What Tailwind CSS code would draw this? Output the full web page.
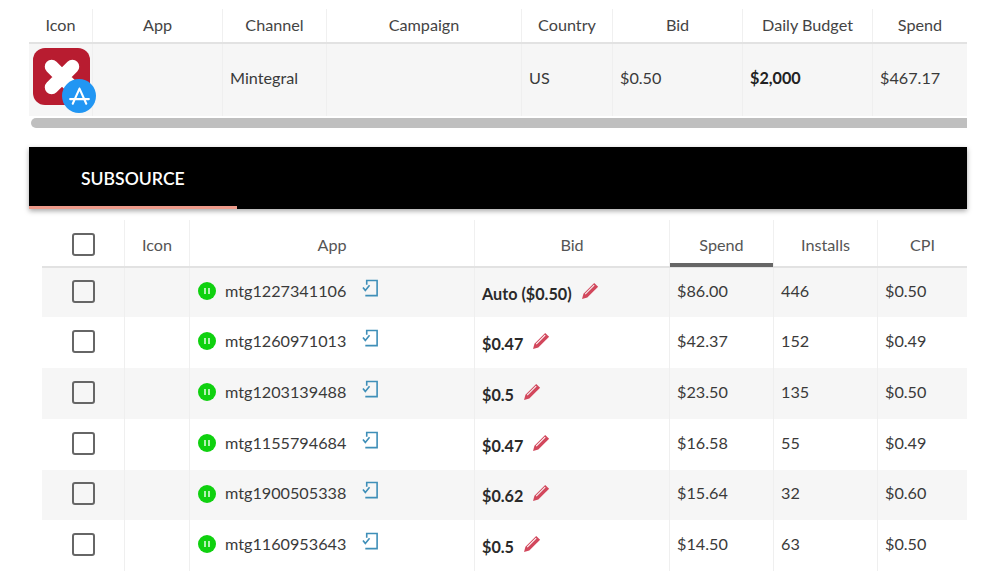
<!DOCTYPE html>
<html lang="en">
<head>
<meta charset="UTF-8">
<title>Subsource</title>
<script src="https://cdn.jsdelivr.net/npm/@tailwindcss/browser@4"></script>
</head>
<body class="bg-white font-['Lato','Open_Sans',sans-serif] text-[16.2px] text-[#3a3a3a] overflow-hidden">
<div class="w-[1000px] h-[576px] overflow-hidden pl-[29px] pt-[9px]">

  <!-- campaign table -->
  <div class="w-[938px]">
    <div class="grid grid-cols-[64px_130px_104px_195px_91px_130px_130px_94px] h-[35px] border-b-2 border-[#e2e2e2] text-center text-[#444] divide-x divide-[#f0f0f0]">
      <div class="pt-[4px]">Icon</div>
      <div class="pt-[4px]">App</div>
      <div class="pt-[4px]">Channel</div>
      <div class="pt-[4px]">Campaign</div>
      <div class="pt-[4px]">Country</div>
      <div class="pt-[4px]">Bid</div>
      <div class="pt-[4px]">Daily Budget</div>
      <div class="pt-[4px]">Spend</div>
    </div>
    <div class="grid grid-cols-[64px_130px_104px_195px_91px_130px_130px_94px] h-[72px] bg-[#f6f6f6] items-center divide-x divide-[#efefef] [&>div]:h-full [&>div]:flex [&>div]:items-center [&>div]:px-[7px] [&>div]:pb-[4px]">
      <div class="relative">
        <div class="absolute left-[4px] top-[4px] w-[57px] h-[57px] rounded-[12px] bg-[#b81c30] flex items-center justify-center">
          <svg viewBox="0 0 40 40" class="w-[46px] h-[46px]"><path d="M11 11 L29 29 M29 11 L11 29" stroke="#fff" stroke-width="12" stroke-linecap="round"/></svg>
        </div>
        <div class="absolute left-[33px] top-[35px] w-[34px] h-[34px] rounded-full bg-[#2196f3] flex items-center justify-center">
          <svg viewBox="0 0 24 24" class="w-[25px] h-[25px]" fill="none" stroke="#fff" stroke-width="2" stroke-linecap="round"><path d="M12 4.500 L5.500 19 M12 4.500 L18.500 19 M3 14.500 H21"/></svg>
        </div>
      </div>
      <div></div>
      <div>Mintegral</div>
      <div></div>
      <div>US</div>
      <div>$0.50</div>
      <div class="font-bold text-[#222]">$2,000</div>
      <div>$467.17</div>
    </div>
    <div class="h-[10px] mt-[2px] ml-[2px] bg-[#bfbfbf] rounded-l-full"></div>
  </div>

  <!-- subsource tab bar -->
  <div class="w-[938px] h-[62px] mt-[19px] bg-black shadow-[0_2px_5px_rgba(0,0,0,0.35)]">
    <div class="w-[208px] h-full border-b-[3px] border-[#ee9a8a] pl-[52px] pt-[19px] text-white text-[17.6px] font-semibold">SUBSOURCE</div>
  </div>

  <!-- subsource table -->
  <div class="w-[925px] ml-[13px] mt-[11px]">
    <div class="grid grid-cols-[83px_65px_285px_195px_104px_104px_89px] h-[48px] border-b-2 border-[#e2e2e2] text-center text-[#555] divide-x divide-[#f0f0f0] [&>div]:pt-[13px]">
      <div class="flex justify-center"><span class="w-[23px] h-[23px] border-2 border-[#666] rounded-[3px]"></span></div>
      <div>Icon</div>
      <div>App</div>
      <div>Bid</div>
      <div class="relative">Spend<span class="absolute left-0 right-0 bottom-[-1px] h-[4px] bg-[#666]"></span></div>
      <div>Installs</div>
      <div>CPI</div>
    </div>

    <div class="grid grid-cols-[83px_65px_285px_195px_104px_104px_89px] h-[49px] bg-[#f6f6f6] divide-x divide-[#efefef] [&>div]:flex [&>div]:items-center [&>div]:px-[7px] [&>div]:pb-[3px]">
      <div class="justify-center !px-0"><span class="w-[23px] h-[23px] border-2 border-[#666] rounded-[3px]"></span></div>
      <div></div>
      <div class="!pl-[8px] gap-[9px]">
        <svg viewBox="0 0 18 18" class="w-[18px] h-[18px] shrink-0"><circle cx="9" cy="9" r="9" fill="#0fd10f"/><path d="M7 6v6M11 6v6" stroke="#c4f5c4" stroke-width="1.8"/></svg>
        <span class="w-[122px]">mtg1227341106</span>
        <svg viewBox="0 0 18 20" class="w-[17px] h-[19px] ml-[6px] -mt-[6px]" fill="none" stroke="#3f8fb8" stroke-width="1.7"><path d="M5 6V1.500h11v16H3.500"/><path d="M1 9l2.500 3L8 6.500"/></svg>
      </div>
      <div class="font-bold text-[#2a2a2a] text-[16.2px] gap-[9px]"><span class="mt-[6px]">Auto ($0.50)</span>
        <svg viewBox="0 0 18 18" class="w-[19px] h-[19px] -mt-[2px]" fill="#d2475c"><path d="M1 17l1.300-5L12.500 1.800l3.700 3.700L6 15.700z"/><path d="M4 12.500L12.500 4" stroke="#f6f6f6" stroke-width="1"/></svg>
      </div>
      <div>$86.00</div>
      <div>446</div>
      <div>$0.50</div>
    </div>

    <div class="grid grid-cols-[83px_65px_285px_195px_104px_104px_89px] h-[51px] divide-x divide-[#efefef] [&>div]:flex [&>div]:items-center [&>div]:px-[7px] [&>div]:pb-[3px]">
      <div class="justify-center !px-0"><span class="w-[23px] h-[23px] border-2 border-[#666] rounded-[3px]"></span></div>
      <div></div>
      <div class="!pl-[8px] gap-[9px]">
        <svg viewBox="0 0 18 18" class="w-[18px] h-[18px] shrink-0"><circle cx="9" cy="9" r="9" fill="#0fd10f"/><path d="M7 6v6M11 6v6" stroke="#c4f5c4" stroke-width="1.8"/></svg>
        <span class="w-[122px]">mtg1260971013</span>
        <svg viewBox="0 0 18 20" class="w-[17px] h-[19px] ml-[6px] -mt-[6px]" fill="none" stroke="#3f8fb8" stroke-width="1.7"><path d="M5 6V1.500h11v16H3.500"/><path d="M1 9l2.500 3L8 6.500"/></svg>
      </div>
      <div class="font-bold text-[#2a2a2a] text-[16.2px] gap-[9px]"><span class="mt-[6px]">$0.47</span>
        <svg viewBox="0 0 18 18" class="w-[19px] h-[19px] -mt-[2px]" fill="#d2475c"><path d="M1 17l1.300-5L12.500 1.800l3.700 3.700L6 15.700z"/><path d="M4 12.500L12.500 4" stroke="#fff" stroke-width="1"/></svg>
      </div>
      <div>$42.37</div>
      <div>152</div>
      <div>$0.49</div>
    </div>

    <div class="grid grid-cols-[83px_65px_285px_195px_104px_104px_89px] h-[51px] bg-[#f6f6f6] divide-x divide-[#efefef] [&>div]:flex [&>div]:items-center [&>div]:px-[7px] [&>div]:pb-[3px]">
      <div class="justify-center !px-0"><span class="w-[23px] h-[23px] border-2 border-[#666] rounded-[3px]"></span></div>
      <div></div>
      <div class="!pl-[8px] gap-[9px]">
        <svg viewBox="0 0 18 18" class="w-[18px] h-[18px] shrink-0"><circle cx="9" cy="9" r="9" fill="#0fd10f"/><path d="M7 6v6M11 6v6" stroke="#c4f5c4" stroke-width="1.8"/></svg>
        <span class="w-[122px]">mtg1203139488</span>
        <svg viewBox="0 0 18 20" class="w-[17px] h-[19px] ml-[6px] -mt-[6px]" fill="none" stroke="#3f8fb8" stroke-width="1.7"><path d="M5 6V1.500h11v16H3.500"/><path d="M1 9l2.500 3L8 6.500"/></svg>
      </div>
      <div class="font-bold text-[#2a2a2a] text-[16.2px] gap-[9px]"><span class="mt-[6px]">$0.5</span>
        <svg viewBox="0 0 18 18" class="w-[19px] h-[19px] -mt-[2px]" fill="#d2475c"><path d="M1 17l1.300-5L12.500 1.800l3.700 3.700L6 15.700z"/><path d="M4 12.500L12.500 4" stroke="#f6f6f6" stroke-width="1"/></svg>
      </div>
      <div>$23.50</div>
      <div>135</div>
      <div>$0.50</div>
    </div>

    <div class="grid grid-cols-[83px_65px_285px_195px_104px_104px_89px] h-[51px] divide-x divide-[#efefef] [&>div]:flex [&>div]:items-center [&>div]:px-[7px] [&>div]:pb-[3px]">
      <div class="justify-center !px-0"><span class="w-[23px] h-[23px] border-2 border-[#666] rounded-[3px]"></span></div>
      <div></div>
      <div class="!pl-[8px] gap-[9px]">
        <svg viewBox="0 0 18 18" class="w-[18px] h-[18px] shrink-0"><circle cx="9" cy="9" r="9" fill="#0fd10f"/><path d="M7 6v6M11 6v6" stroke="#c4f5c4" stroke-width="1.8"/></svg>
        <span class="w-[122px]">mtg1155794684</span>
        <svg viewBox="0 0 18 20" class="w-[17px] h-[19px] ml-[6px] -mt-[6px]" fill="none" stroke="#3f8fb8" stroke-width="1.7"><path d="M5 6V1.500h11v16H3.500"/><path d="M1 9l2.500 3L8 6.500"/></svg>
      </div>
      <div class="font-bold text-[#2a2a2a] text-[16.2px] gap-[9px]"><span class="mt-[6px]">$0.47</span>
        <svg viewBox="0 0 18 18" class="w-[19px] h-[19px] -mt-[2px]" fill="#d2475c"><path d="M1 17l1.300-5L12.500 1.800l3.700 3.700L6 15.700z"/><path d="M4 12.500L12.500 4" stroke="#fff" stroke-width="1"/></svg>
      </div>
      <div>$16.58</div>
      <div>55</div>
      <div>$0.49</div>
    </div>

    <div class="grid grid-cols-[83px_65px_285px_195px_104px_104px_89px] h-[50px] bg-[#f6f6f6] divide-x divide-[#efefef] [&>div]:flex [&>div]:items-center [&>div]:px-[7px] [&>div]:pb-[3px]">
      <div class="justify-center !px-0"><span class="w-[23px] h-[23px] border-2 border-[#666] rounded-[3px]"></span></div>
      <div></div>
      <div class="!pl-[8px] gap-[9px]">
        <svg viewBox="0 0 18 18" class="w-[18px] h-[18px] shrink-0"><circle cx="9" cy="9" r="9" fill="#0fd10f"/><path d="M7 6v6M11 6v6" stroke="#c4f5c4" stroke-width="1.8"/></svg>
        <span class="w-[122px]">mtg1900505338</span>
        <svg viewBox="0 0 18 20" class="w-[17px] h-[19px] ml-[6px] -mt-[6px]" fill="none" stroke="#3f8fb8" stroke-width="1.7"><path d="M5 6V1.500h11v16H3.500"/><path d="M1 9l2.500 3L8 6.500"/></svg>
      </div>
      <div class="font-bold text-[#2a2a2a] text-[16.2px] gap-[9px]"><span class="mt-[6px]">$0.62</span>
        <svg viewBox="0 0 18 18" class="w-[19px] h-[19px] -mt-[2px]" fill="#d2475c"><path d="M1 17l1.300-5L12.500 1.800l3.700 3.700L6 15.700z"/><path d="M4 12.500L12.500 4" stroke="#f6f6f6" stroke-width="1"/></svg>
      </div>
      <div>$15.64</div>
      <div>32</div>
      <div>$0.60</div>
    </div>

    <div class="grid grid-cols-[83px_65px_285px_195px_104px_104px_89px] h-[51px] divide-x divide-[#efefef] [&>div]:flex [&>div]:items-center [&>div]:px-[7px] [&>div]:pb-[3px]">
      <div class="justify-center !px-0"><span class="w-[23px] h-[23px] border-2 border-[#666] rounded-[3px]"></span></div>
      <div></div>
      <div class="!pl-[8px] gap-[9px]">
        <svg viewBox="0 0 18 18" class="w-[18px] h-[18px] shrink-0"><circle cx="9" cy="9" r="9" fill="#0fd10f"/><path d="M7 6v6M11 6v6" stroke="#c4f5c4" stroke-width="1.8"/></svg>
        <span class="w-[122px]">mtg1160953643</span>
        <svg viewBox="0 0 18 20" class="w-[17px] h-[19px] ml-[6px] -mt-[6px]" fill="none" stroke="#3f8fb8" stroke-width="1.7"><path d="M5 6V1.500h11v16H3.500"/><path d="M1 9l2.500 3L8 6.500"/></svg>
      </div>
      <div class="font-bold text-[#2a2a2a] text-[16.2px] gap-[9px]"><span class="mt-[6px]">$0.5</span>
        <svg viewBox="0 0 18 18" class="w-[19px] h-[19px] -mt-[2px]" fill="#d2475c"><path d="M1 17l1.300-5L12.500 1.800l3.700 3.700L6 15.700z"/><path d="M4 12.500L12.500 4" stroke="#fff" stroke-width="1"/></svg>
      </div>
      <div>$14.50</div>
      <div>63</div>
      <div>$0.50</div>
    </div>
  </div>
</div>
</body>
</html>
